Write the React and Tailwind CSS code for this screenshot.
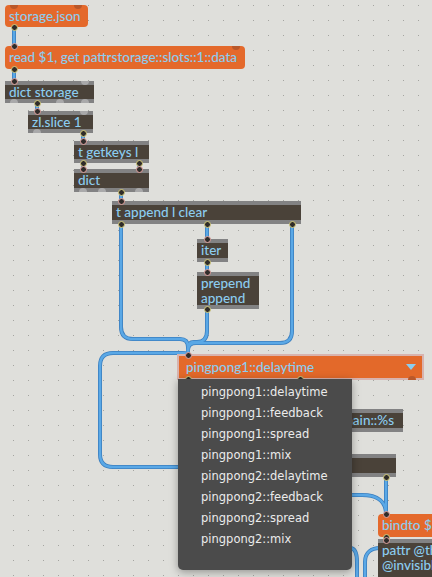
// Max patcher view: pattrstorage -> dict -> umenu, with the umenu popup open
const PATCH_FONT = "font-['Lato','Liberation_Sans',sans-serif] font-medium";

const MENU_ITEMS = [
  "pingpong1::delaytime",
  "pingpong1::feedback",
  "pingpong1::spread",
  "pingpong1::mix",
  "pingpong2::delaytime",
  "pingpong2::feedback",
  "pingpong2::spread",
  "pingpong2::mix",
];

// cords, drawn under the boxes
const CORDS = [
  "M14 27 L14 46",
  "M14 69 L14 81",
  "M37 103 L37 111",
  "M83 133 L83 141",
  "M83 163 L83 169",
  "M139 163 L139 169",
  "M121 192 L121 201",
  "M207 224 L207 239",
  "M207 262 L207 272",
  "M121 224 L121 327 Q121 339 133 339 L180 339 Q188 339 188 347 L188 355",
  "M207 309 L207 331 Q207 342 197 342 L194 342 Q188 342 188 349 L188 355",
  "M292 224 L292 331 Q292 343 280 343 L196 343 Q188 343 188 350 L188 355",
  "M200 467 L113 467 Q100 467 100 454 L100 366 Q100 353 113 353 L182 353 Q188 353 188 356",
  "M386 477 L386 514",
  "M320 495 L362 495 C378 495 386 502 386 514",
  "M386 537 L386 539",
  "M340 548 L350 548 C355 548 357 553 357 562 L357 577",
  "M365 577 L365 562 C365 552 372 548 380 548 C384 548 386 545 386 540",
];

function Obj({ x, y, w, h = 23, lines = [], right = false }) {
  return (
    <div
      className={`absolute flex flex-col bg-[#4a4239] ${PATCH_FONT}`}
      style={{ left: x, top: y, width: w, height: h }}
    >
      <div className="h-[4px] bg-[#828283]" />
      <div
        className={`flex-1 flex flex-col text-[13.5px] leading-[14.5px] text-[#8ccdf0] whitespace-nowrap overflow-hidden ${
          right ? "items-end pl-[4px] pr-[9px]" : "px-[4px]"
        }`}
      >
        {lines.map((l) => (
          <span key={l}>{l}</span>
        ))}
      </div>
      <div className="h-[4px] bg-[#828283]" />
    </div>
  );
}

function Msg({ x, y, w, h = 23, text }) {
  return (
    <div
      className={`absolute rounded-[4px] bg-[#e4692b] px-[4px] pt-[4px] text-[13.5px] leading-[15px] text-[#8ccdf0] whitespace-nowrap overflow-hidden ${PATCH_FONT}`}
      style={{ left: x, top: y, width: w, height: h }}
    >
      {text}
    </div>
  );
}

// connected port: ring with a dark centre
function Port({ x, y, out }) {
  return (
    <span
      className={`absolute w-[7px] h-[7px] rounded-full border bg-[#2f2c2a] ${
        out ? "border-[#d8cf7e]" : "border-[#e3a4a0]"
      }`}
      style={{ left: x - 3.5, top: y - 3.5 }}
    />
  );
}

// unconnected port: a small dome on the edge
function Dome({ x, y, bottom, msg }) {
  return (
    <span
      className={`absolute w-[8px] h-[4px] ${bottom ? "rounded-t-full" : "rounded-b-full"} ${
        msg ? "bg-[#b9582a]" : "bg-[#a9a9aa]"
      }`}
      style={{ left: x - 4, top: bottom ? y - 4 : y }}
    />
  );
}

export default function App() {
  return (
    <div className="relative w-[432px] h-[577px] overflow-hidden bg-[#dfdfdb]">
      <svg className="absolute inset-0" width="432" height="577">
        <defs>
          <pattern id="grid" x="13" y="5" width="15" height="15" patternUnits="userSpaceOnUse">
            <rect x="0" y="0" width="1" height="1" fill="#a4a4a0" />
          </pattern>
        </defs>
        <rect width="432" height="577" fill="url(#grid)" />
        <g fill="none" strokeLinecap="round" strokeLinejoin="round">
          {CORDS.map((d) => (
            <path key={d + "o"} d={d} stroke="#3b7fbf" strokeWidth="4" />
          ))}
          {CORDS.map((d) => (
            <path key={d + "i"} d={d} stroke="#5aa8e6" strokeWidth="2.4" />
          ))}
        </g>
      </svg>

      <Msg x={5} y={5} w={83} h={22} text="storage.json" />
      <Msg x={5} y={46} w={240} text="read $1, get pattrstorage::slots::1::data" />
      <Obj x={5} y={81} w={89} h={22} lines={["dict storage"]} />
      <Obj x={28} y={111} w={65} h={22} lines={["zl.slice 1"]} />
      <Obj x={74} y={141} w={75} h={22} lines={["t getkeys l"]} />
      <Obj x={74} y={169} w={75} lines={["dict"]} />
      <Obj x={112} y={201} w={189} lines={["t append l clear"]} />
      <Obj x={197} y={239} w={31} lines={["iter"]} />
      <Obj x={197} y={272} w={62} h={37} lines={["prepend", "append"]} />
      <Obj x={300} y={409} w={103} lines={["main::%s"]} right />
      <Obj x={300} y={454} w={96} lines={[""]} />
      <Msg x={378} y={514} w={80} text="bindto $1" />
      <Obj x={378} y={539} w={120} h={50} lines={["pattr @thispatcher", "@invisible 1"]} />

      {/* ports */}
      <Dome x={14} y={5} msg />
      <Dome x={78} y={5} msg />
      <Port x={14} y={27} out />
      <Port x={14} y={46} />
      <Dome x={236} y={46} msg />
      <Port x={14} y={69} out />
      <Port x={14} y={81} />
      <Dome x={85} y={81} />
      <Dome x={14} y={103} bottom />
      <Port x={37} y={103} out />
      <Dome x={60} y={103} bottom />
      <Dome x={85} y={103} bottom />
      <Port x={37} y={111} />
      <Dome x={84} y={111} />
      <Dome x={37} y={133} bottom />
      <Port x={83} y={133} out />
      <Port x={83} y={141} />
      <Port x={83} y={163} out />
      <Port x={139} y={163} out />
      <Port x={83} y={169} />
      <Port x={139} y={169} />
      <Dome x={83} y={192} bottom />
      <Dome x={102} y={192} bottom />
      <Port x={121} y={192} out />
      <Dome x={139} y={192} bottom />
      <Port x={121} y={201} />
      <Port x={121} y={224} out />
      <Port x={207} y={224} out />
      <Port x={292} y={224} out />
      <Port x={207} y={239} />
      <Port x={207} y={262} out />
      <Port x={207} y={272} />
      <Port x={207} y={309} out />
      <Port x={386} y={477} out />
      <Port x={386} y={514} />
      <Port x={386} y={537} out />
      <Port x={386} y={540} />

      {/* umenu */}
      <div
        className={`absolute left-[177px] top-[354px] w-[247px] h-[26px] border-2 border-[#d8b3ae] bg-[#e3692a] flex items-center justify-between pl-[7px] pr-[6px] text-[13.5px] text-[#8ccdf0] ${PATCH_FONT}`}
      >
        <span className="leading-[15px]">pingpong1::delaytime</span>
        <svg width="10" height="6" viewBox="0 0 10 6">
          <path d="M0 0 L10 0 L5 6 Z" fill="#8ccdf0" />
        </svg>
      </div>
      <Port x={188} y={355} />
      <Port x={188} y={379} out />
      <Port x={300} y={379} out />
      <Dome x={412} y={380} bottom msg />

      {/* popup menu */}
      <div className="absolute left-[178px] top-[379px] w-[174px] h-[191px] rounded-b-[5px] bg-[#4b4b4b] shadow-[0_2px_8px_rgba(0,0,0,0.35)] pt-[3px] font-['DejaVu_Sans',sans-serif] text-[11.5px] text-[#ebebeb]">
        {MENU_ITEMS.map((item) => (
          <div key={item} className="h-[21px] leading-[21px] pl-[23px]">
            {item}
          </div>
        ))}
      </div>
    </div>
  );
}
